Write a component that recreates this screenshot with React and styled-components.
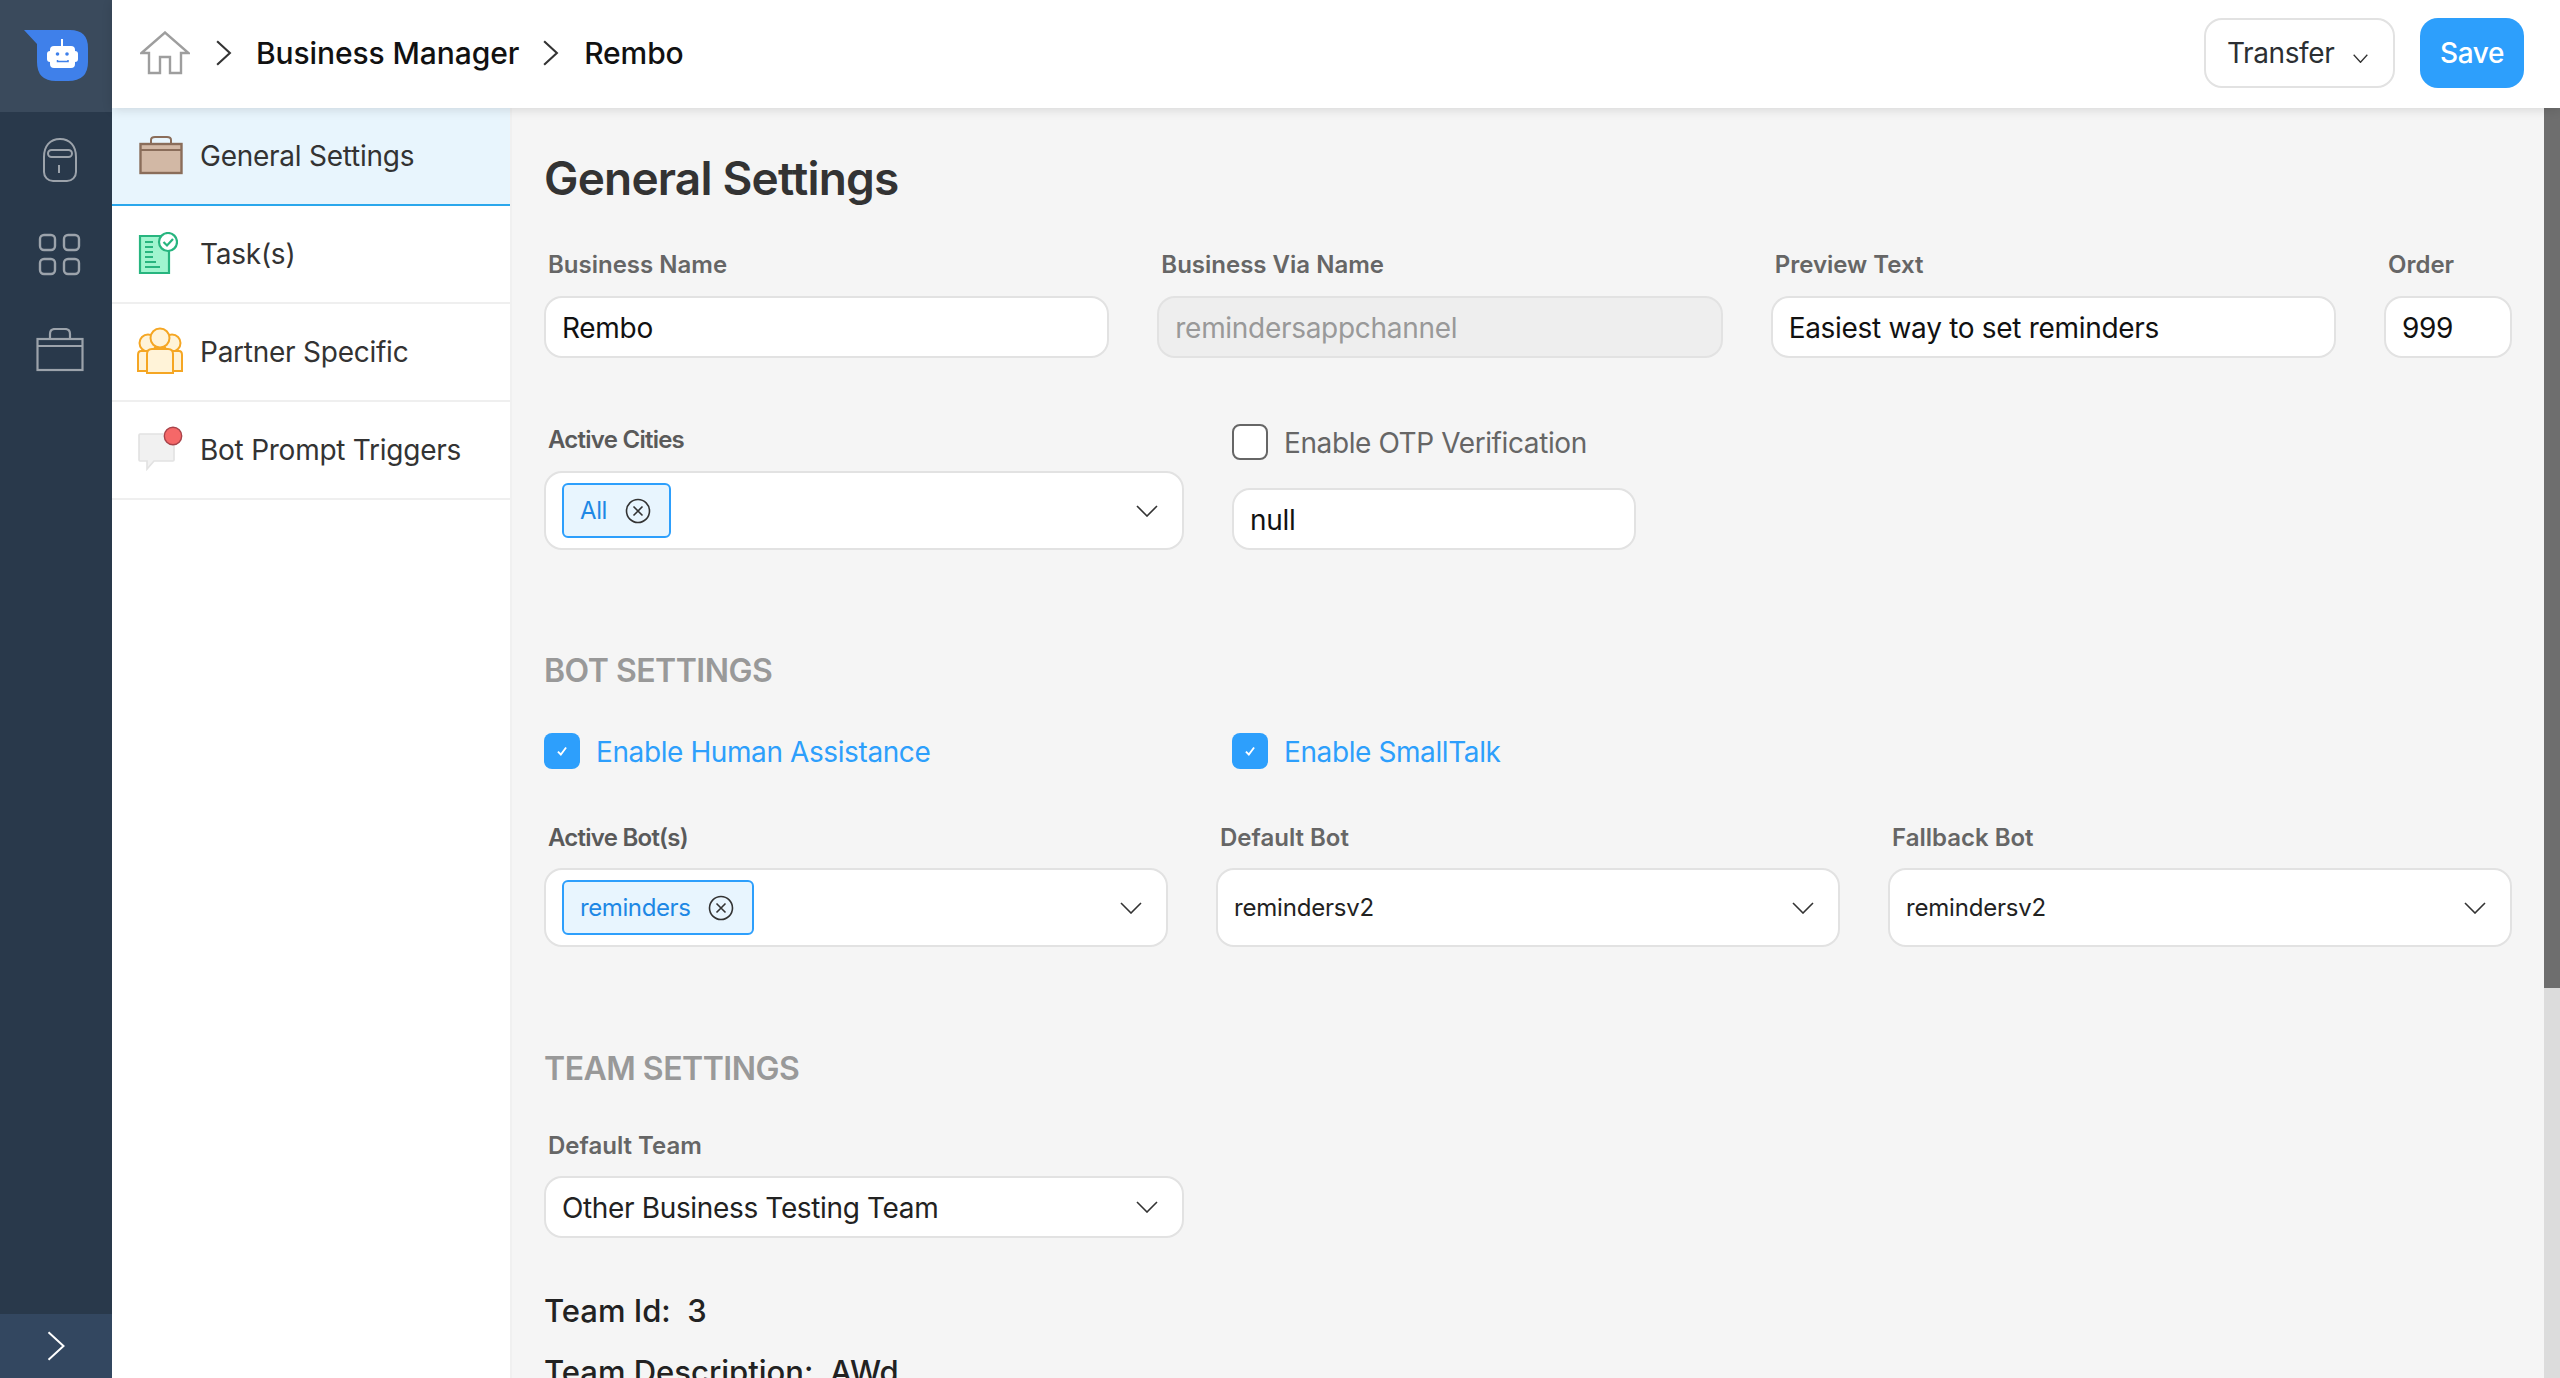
import React from "react";
import styled, { createGlobalStyle } from "styled-components";

const Global = createGlobalStyle`
  html, body { margin: 0; padding: 0; height: 100%; overflow: hidden; }
  body { font-family: Inter, "Noto Sans", "Liberation Sans", sans-serif; background: #fff; }
  #root { height: 100%; }
  * { box-sizing: border-box; }
`;

const Shell = styled.div`display: flex; height: 1378px; overflow: hidden;`;
const Rail = styled.nav`
  width: 112px; flex: none; background: #29394b; display: flex; flex-direction: column; align-items: center;
`;
const LogoCell = styled.div`
  width: 100%; height: 112px; background: #3a4a5c; display: flex; align-items: center; justify-content: center;
`;
const RailItems = styled.div`display: flex; flex-direction: column; align-items: center; flex: 1; width: 100%; padding-left: 8px;`;
const RailItem = styled.div`width: 100%; height: 95px; display: flex; align-items: center; justify-content: center;`;
const Collapse = styled.div`
  width: 100%; height: 64px; background: #334760; display: flex; align-items: center; justify-content: center;
`;
const Column = styled.div`flex: 1; min-width: 0; display: flex; flex-direction: column; position: relative;`;
const Header = styled.header`
  height: 108px; flex: none; background: #fff; display: flex; align-items: center; padding: 0 36px 2px 28px;
  box-shadow: 0 2px 10px rgba(0,0,0,.12); position: relative; z-index: 2;
`;
const Crumbs = styled.div`display: flex; align-items: center; flex: 1; font-size: 30px; font-weight: 500; letter-spacing: -0.1px; color: #111;`;
const CrumbSep = styled.span`display: flex; width: 20px; justify-content: center; margin: ${p => p.$m};`;
const Actions = styled.div`display: flex; gap: 25px; align-items: center;`;
const TransferBtn = styled.button`
  height: 70px; width: 191px; border: 2px solid #e2e2e2; border-radius: 18px; background: #fff; font: 400 28px Inter, sans-serif;
  letter-spacing: -0.4px; color: #2b2f33; display: flex; align-items: center; padding: 0 0 0 21px; gap: 19px;
`;
const TransferCaret = styled.span`display: flex; margin-top: 10px;`;
const SaveBtn = styled.button`
  height: 70px; width: 104px; border: 0; border-radius: 18px; background: #2d9ffc; color: #fff; font: 500 28px Inter, sans-serif;
  letter-spacing: -0.4px;
`;
const Body = styled.div`flex: 1; min-height: 0; display: flex;`;
const SubMenu = styled.aside`width: 400px; flex: none; background: #fff; border-right: 2px solid #f0f0f0;`;
const SubItem = styled.div`
  height: 98px; display: flex; align-items: center; font-size: 28px; letter-spacing: -0.25px; color: #333;
  border-bottom: 2px solid ${p => (p.$active ? "#2aa7ec" : "#efefef")};
  background: ${p => (p.$active ? "#e8f5fd" : "#fff")};
`;
const SubIcon = styled.span`width: 88px; padding-left: 24px; display: flex; flex: none; margin-top: -2px;`;
const Main = styled.main`flex: 1; min-width: 0; background: #f5f5f5; padding: 42px 48px 0 32px; overflow: hidden;`;
const Title = styled.h1`margin: 0 0 43px; font: 600 46px/56px Inter, sans-serif; letter-spacing: -0.8px; color: #333;`;
const Row = styled.div`
  display: grid; grid-template-columns: ${p => p.$cols}; column-gap: 48px; margin-top: ${p => p.$top || 0}px;
`;
const Field = styled.div`display: flex; flex-direction: column; gap: ${p => p.$gap || 15}px; min-width: 0;`;
const Label = styled.label`
  font: 600 24px/32px Inter, sans-serif; padding-left: 4px;
  color: ${p => (p.$tight ? "#5a5a5a" : "#666")}; letter-spacing: ${p => (p.$tight ? "-0.75px" : "0")};
`;
const Input = styled.div`
  height: 62px; border: 2px solid #e2e2e2; border-radius: 18px; background: ${p => (p.$disabled ? "#eee" : "#fff")};
  color: ${p => (p.$disabled ? "#999" : "#111")}; font-size: 28px; letter-spacing: -0.3px; display: flex; align-items: center; padding: 2px 16px 0;
`;
const Select = styled.div`
  height: ${p => p.$h || 79}px; border: 2px solid #e2e2e2; border-radius: 18px; background: #fff; display: flex; align-items: center;
  justify-content: space-between; padding: 0 24px 0 16px; font-size: ${p => p.$fs || 24}px; letter-spacing: -0.2px; color: #222;
`;
const TeamValue = styled.span`padding-top: 2px; letter-spacing: -0.35px;`;
const Tag = styled.span`
  height: 55px; border: 2px solid #2d9ffc; border-radius: 6px; background: #e8f5fe; color: #1e88e5; font-size: 24px;
  letter-spacing: -0.4px; display: flex; align-items: center; padding: 0 18px 0 16px; gap: 18px;
`;
const OtpColumn = styled.div`display: flex; flex-direction: column; gap: 28px;`;
const Check = styled.span`
  width: 36px; height: 36px; flex: none; border-radius: 8px; display: flex; align-items: center; justify-content: center;
  background: ${p => (p.$on ? "#2d9ffc" : "#fff")}; border: ${p => (p.$on ? "0" : "2px solid #666")};
`;
const CheckRow = styled.div`
  display: flex; align-items: center; gap: 16px; font-size: 28px; line-height: 36px; letter-spacing: -0.4px;
  color: ${p => (p.$on ? "#2d9ffc" : "#666")};
`;
const CheckText = styled.span`line-height: 33px; padding-top: 3px;`;
const Section = styled.h2`
  margin: ${p => p.$top}px 0 0; font: 600 32px/40px Inter, sans-serif; letter-spacing: -0.5px; color: #999;
`;
const Info = styled.div`
  margin-top: ${p => p.$top}px; font: 500 31px/40px Inter, sans-serif; color: #222; white-space: pre;
`;
const Track = styled.div`position: absolute; top: 108px; right: 0; bottom: 0; width: 16px; background: #dcdcdc; z-index: 1;`;
const Thumb = styled.div`height: 880px; background: #6e6e6e;`;

const Chevron = ({ w = 22, h = 12, c = "#333", sw = 1.6 }) => (
  <svg width={w} height={h} viewBox="0 0 22 12" preserveAspectRatio="none" fill="none"><path d="M1 1l10 10L21 1" stroke={c} strokeWidth={sw} /></svg>
);
const TagX = () => (
  <svg width="26" height="26" viewBox="0 0 26 26" fill="none"><circle cx="13" cy="13" r="11.5" stroke="#333" strokeWidth="1.6" /><path d="M8.500 8.500l9 9M17.500 8.500l-9 9" stroke="#333" strokeWidth="1.6" /></svg>
);
const Tick = () => (
  <svg width="14" height="14" viewBox="0 0 12 12" fill="none"><path d="M2.500 6.500l2.500 2.500 4.500-6" stroke="#fff" strokeWidth="1.6" /></svg>
);
const Logo = () => (
  <svg width="64" height="51" viewBox="24 30 64 51" style={{ marginTop: -2 }}>
    <path d="M24 30H70Q88 30 88 48V62Q88 81 68 81H56Q37 81 37 62V44Z" fill="#3f80ea" />
    <path d="M61 39h2v7h-2z" fill="#fff" />
    <rect x="50" y="46" width="25" height="22" rx="4" fill="#fff" />
    <rect x="47" y="51" width="31" height="11" rx="3" fill="#fff" />
    <circle cx="57.500" cy="54" r="1.800" fill="#3f80ea" />
    <circle cx="67" cy="54" r="1.800" fill="#3f80ea" />
    <path d="M57.500 60v1.600h10.500V60" fill="none" stroke="#3f80ea" strokeWidth="1.500" />
  </svg>
);
const BotRail = () => (
  <svg width="36" height="44" viewBox="0 0 36 44" fill="none" stroke="#9ca3ab" strokeWidth="2">
    <path d="M2 19C2 8 8 1 18 1s16 7 16 18v15c0 5-4 9-9 9H11c-5 0-9-4-9-9z" />
    <rect x="6" y="12" width="24" height="7" rx="3.500" />
    <path d="M17 27v8" />
  </svg>
);
const GridRail = () => (
  <svg width="44" height="44" viewBox="0 0 44 44" fill="none" stroke="#9ca3ab" strokeWidth="2.400">
    <rect x="2" y="2" width="15" height="15" rx="4" /><rect x="26" y="2" width="15" height="15" rx="4" />
    <rect x="2" y="26" width="15" height="15" rx="4" /><rect x="26" y="26" width="15" height="15" rx="4" />
  </svg>
);
const CaseRail = () => (
  <svg width="48" height="44" viewBox="0 0 48 44" fill="none" stroke="#9ca3ab" strokeWidth="2.200">
    <path d="M14 11V6c0-3 2-5 5-5h10c3 0 5 2 5 5v5" />
    <rect x="1.500" y="11" width="45" height="31" />
    <path d="M2 18h44" />
  </svg>
);
const CaseIcon = () => (
  <svg width="44" height="40" viewBox="0 0 44 40" style={{ marginLeft: 3 }}>
    <path d="M12 9V5c0-2 2-3 4-3h12c2 0 4 1 4 3v4" fill="none" stroke="#8a6d5a" strokeWidth="2" />
    <rect x="1.500" y="9" width="41" height="29" fill="#d2b8a5" stroke="#8a6d5a" strokeWidth="2.400" />
    <path d="M2 15h40" stroke="#8a6d5a" strokeWidth="2" />
  </svg>
);
const TaskIcon = () => (
  <svg width="40" height="42" viewBox="0 0 40 42" style={{ marginLeft: 2 }}>
    <path d="M2 4h29v37H2z" fill="#a0f5cf" stroke="#27b57f" strokeWidth="2.200" />
    <path d="M7 10h8M7 15h8M7 20h8M7 25h8M7 30h11M7 35h15" stroke="#27b57f" strokeWidth="2" />
    <circle cx="30" cy="10" r="9" fill="#fff" stroke="#27b57f" strokeWidth="2.200" />
    <path d="M25.500 10l3.500 3.500 6-6.500" fill="none" stroke="#27b57f" strokeWidth="2.200" />
  </svg>
);
const TeamIcon = () => (
  <svg width="48" height="48" viewBox="0 0 48 48" stroke="#f5a623" strokeWidth="2" fill="#fff3d8">
    <circle cx="12" cy="16" r="8.500" /><circle cx="36" cy="16" r="8.500" />
    <path d="M9 24H5c-2 0-3 2-3 4v16h44V28c0-2-1-4-3-4h-4z" />
    <circle cx="24" cy="11" r="9.500" />
    <path d="M16 22h16c3 0 5 2 5 5v19H11V27c0-3 2-5 5-5z" />
  </svg>
);
const PromptIcon = () => (
  <svg width="46" height="46" viewBox="0 0 46 46" style={{ marginLeft: 1 }}>
    <path d="M3 8h33a1 1 0 0 1 1 1v25a1 1 0 0 1-1 1H17l-7 8v-8H3a1 1 0 0 1-1-1V9a1 1 0 0 1 1-1z" fill="#f1f1f1" stroke="#e2e2e2" strokeWidth="1.600" />
    <circle cx="36" cy="10" r="8.700" fill="#f56868" stroke="#a8434a" strokeWidth="1.400" />
  </svg>
);
const Home = () => (
  <svg width="50" height="44" viewBox="0 0 50 44" fill="none" stroke="#9e9e9e" strokeWidth="2.400">
    <path d="M1.500 22L25 1.500 48.500 22H41v20H30V26H20v16H9V22z" />
  </svg>
);
const Right = ({ h = 24, c = "#333", sw = 2 }) => (
  <svg width={h / 2 + 4} height={h} viewBox="0 0 16 24" fill="none"><path d="M2 1l12 11L2 23" stroke={c} strokeWidth={sw} /></svg>
);

const Arrow = () => <Chevron />;

export default function App() {
  return (
    <Shell>
      <Global />
      <Rail>
        <LogoCell><Logo /></LogoCell>
        <RailItems>
          <RailItem><BotRail /></RailItem>
          <RailItem><GridRail /></RailItem>
          <RailItem><CaseRail /></RailItem>
        </RailItems>
        <Collapse><Right h={32} c="#fff" sw={1.6} /></Collapse>
      </Rail>
      <Column>
        <Header>
          <Crumbs>
            <Home />
            <CrumbSep $m="0 23px 0 23px"><Right h={26} /></CrumbSep>
            <span>Business Manager</span>
            <CrumbSep $m="0 24px 0 21px"><Right h={26} /></CrumbSep>
            <span>Rembo</span>
          </Crumbs>
          <Actions>
            <TransferBtn>Transfer <TransferCaret><Chevron w={15} h={9} sw={2} /></TransferCaret></TransferBtn>
            <SaveBtn>Save</SaveBtn>
          </Actions>
        </Header>
        <Body>
          <SubMenu>
            <SubItem $active><SubIcon><CaseIcon /></SubIcon>General Settings</SubItem>
            <SubItem><SubIcon><TaskIcon /></SubIcon>Task(s)</SubItem>
            <SubItem><SubIcon><TeamIcon /></SubIcon>Partner Specific</SubItem>
            <SubItem><SubIcon><PromptIcon /></SubIcon>Bot Prompt Triggers</SubItem>
          </SubMenu>
          <Main>
            <Title>General Settings</Title>
            <Row $cols="1fr 1fr 1fr 128px">
              <Field><Label>Business Name</Label><Input>Rembo</Input></Field>
              <Field><Label>Business Via Name</Label><Input $disabled>remindersappchannel</Input></Field>
              <Field><Label>Preview Text</Label><Input>Easiest way to set reminders</Input></Field>
              <Field><Label>Order</Label><Input>999</Input></Field>
            </Row>
            <Row $cols="640px 404px" $top={66}>
              <Field>
                <Label $tight>Active Cities</Label>
                <Select><Tag>All <TagX /></Tag><Arrow /></Select>
              </Field>
              <OtpColumn>
                <CheckRow><Check /><CheckText>Enable OTP Verification</CheckText></CheckRow>
                <Input>null</Input>
              </OtpColumn>
            </Row>
            <Section $top={101}>BOT SETTINGS</Section>
            <Row $cols="640px 1fr" $top={42}>
              <CheckRow $on><Check $on><Tick /></Check><CheckText>Enable Human Assistance</CheckText></CheckRow>
              <CheckRow $on><Check $on><Tick /></Check><CheckText>Enable SmallTalk</CheckText></CheckRow>
            </Row>
            <Row $cols="1fr 1fr 1fr" $top={53}>
              <Field $gap={14}>
                <Label $tight>Active Bot(s)</Label>
                <Select><Tag>reminders <TagX /></Tag><Arrow /></Select>
              </Field>
              <Field $gap={14}>
                <Label>Default Bot</Label>
                <Select>remindersv2<Arrow /></Select>
              </Field>
              <Field $gap={14}>
                <Label>Fallback Bot</Label>
                <Select>remindersv2<Arrow /></Select>
              </Field>
            </Row>
            <Section $top={102}>TEAM SETTINGS</Section>
            <Row $cols="640px" $top={41}>
              <Field $gap={14}>
                <Label>Default Team</Label>
                <Select $h={62} $fs={28}><TeamValue>Other Business Testing Team</TeamValue><Arrow /></Select>
              </Field>
            </Row>
            <Info $top={53}>{"Team Id:  3"}</Info>
            <Info $top={21}>{"Team Description:  AWd"}</Info>
          </Main>
        </Body>
        <Track><Thumb /></Track>
      </Column>
    </Shell>
  );
}
